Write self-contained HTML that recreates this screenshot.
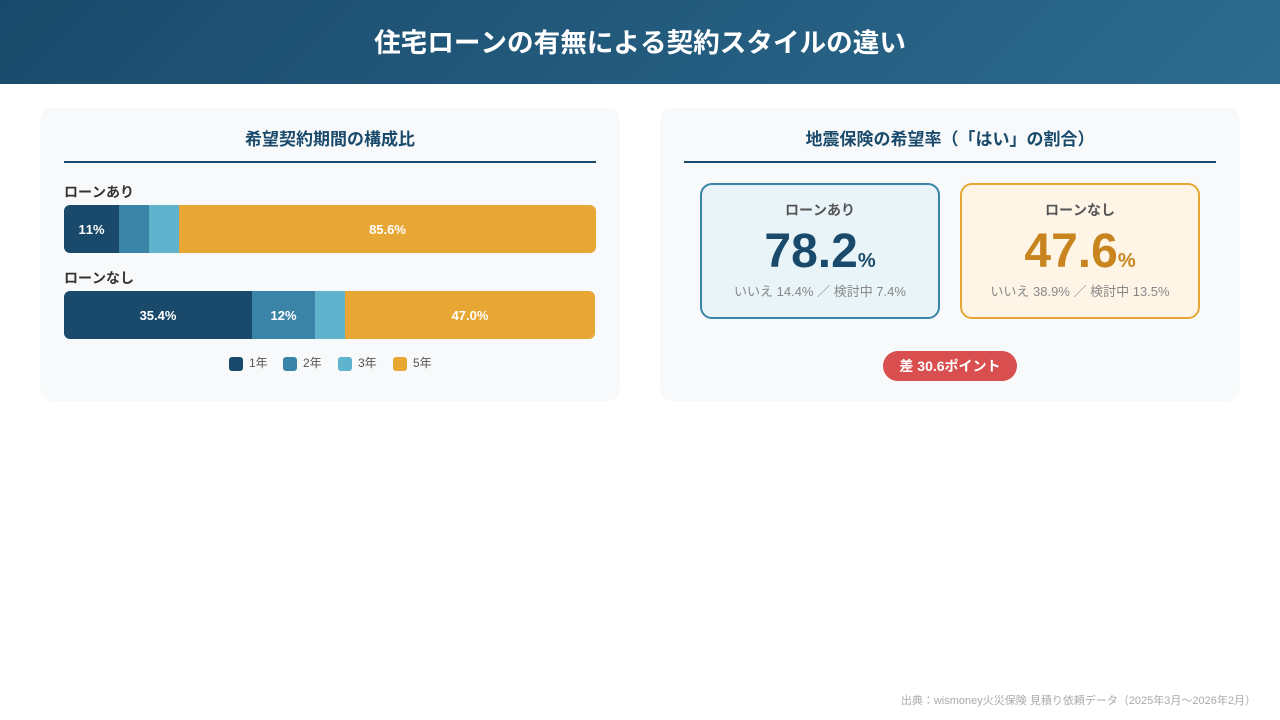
<!DOCTYPE html>
<html lang="ja">
<head>
<meta charset="utf-8">
<style>
*{margin:0;padding:0;box-sizing:border-box}
html,body{width:1280px;height:720px;overflow:hidden;background:#fff}
body{font-family:"Liberation Sans","Noto Sans CJK JP",sans-serif;position:relative;text-spacing-trim:space-all;font-kerning:none;font-feature-settings:"palt" 0,"chws" 0}
.hdr{position:absolute;left:0;top:0;width:1280px;height:84px;background:linear-gradient(135deg,#1a4a6b,#2c6b8f);color:#fff;font-size:26.6px;font-weight:700;text-align:center;line-height:86px}
.card{position:absolute;top:108px;width:580px;height:293px;background:#f8f9fa;border-radius:12px}
.card h2{position:absolute;left:24px;top:20px;width:532px;height:35px;border-bottom:2px solid #1a4a6b;font-size:17px;line-height:24px;font-weight:700;color:#1a4a6b;text-align:center}
.lbl{position:absolute;left:24px;font-size:14px;line-height:20px;font-weight:700;color:#333}
.bar{position:absolute;left:24px;height:48px;display:flex;border-radius:6px;overflow:hidden}
.bar div{height:48px;line-height:50px;text-align:center;color:#fff;font-size:13px;font-weight:700}
.c1{background:#1a4a6b}.c2{background:#3a84a8}.c3{background:#5fb3cc}.c5{background:#e8a735}
.leg{position:absolute;top:249px;height:14px;font-size:12px;line-height:13px;color:#555}
.leg i{position:absolute;left:0;top:0;width:14px;height:14px;border-radius:3px}
.leg span{position:absolute;left:20px;top:0;white-space:nowrap}
.box{position:absolute;top:75px;width:240px;height:136px;border:2px solid;border-radius:12px;text-align:center}
.box .t{position:absolute;left:0;right:0;top:15px;font-size:14px;line-height:20px;font-weight:700;color:#555}
.box .n{position:absolute;left:0;right:0;top:39px;line-height:56px;font-size:48px;font-weight:700}
.box .n small{font-size:20px}
.box .s{position:absolute;left:0;right:0;top:98px;font-size:13px;line-height:18px;color:#888}
.pill{position:absolute;left:223px;top:243px;width:134px;height:30px;border-radius:15px;background:#d94f4f;color:#fff;font-size:14px;font-weight:700;line-height:30px;text-align:center}
.foot{position:absolute;right:24px;top:694px;font-size:11px;line-height:14px;color:#aaa;white-space:nowrap}
</style>
</head>
<body>
<div class="hdr">住宅ローンの有無による契約スタイルの違い</div>
<div class="card" style="left:40px">
<h2>希望契約期間の構成比</h2>
<div class="lbl" style="top:74px">ローンあり</div>
<div class="bar" style="top:97px;width:532px">
<div class="c1" style="width:55px">11%</div><div class="c2" style="width:30px"></div><div class="c3" style="width:30px"></div><div class="c5" style="width:417px">85.6%</div>
</div>
<div class="lbl" style="top:160px">ローンなし</div>
<div class="bar" style="top:183px;width:531px">
<div class="c1" style="width:188px">35.4%</div><div class="c2" style="width:63px">12%</div><div class="c3" style="width:30px"></div><div class="c5" style="width:250px">47.0%</div>
</div>
<div class="leg" style="left:189px"><i class="c1"></i><span>1年</span></div>
<div class="leg" style="left:243px"><i class="c2"></i><span>2年</span></div>
<div class="leg" style="left:298px"><i class="c3"></i><span>3年</span></div>
<div class="leg" style="left:353px"><i class="c5"></i><span>5年</span></div>
</div>
<div class="card" style="left:660px">
<h2>地震保険の希望率（「はい」の割合）</h2>
<div class="box" style="left:40px;background:#e8f4f8;border-color:#3a84a8">
<div class="t">ローンあり</div>
<div class="n" style="color:#1a4a6b">78.2<small>%</small></div>
<div class="s">いいえ 14.4% ／ 検討中 7.4%</div>
</div>
<div class="box" style="left:300px;background:#fef5e7;border-color:#e8a735">
<div class="t">ローンなし</div>
<div class="n" style="color:#c8841e">47.6<small>%</small></div>
<div class="s">いいえ 38.9% ／ 検討中 13.5%</div>
</div>
<div class="pill">差 30.6ポイント</div>
</div>
<div class="foot">出典：wismoney火災保険 見積り依頼データ（2025年3月〜2026年2月）</div>
</body>
</html>
